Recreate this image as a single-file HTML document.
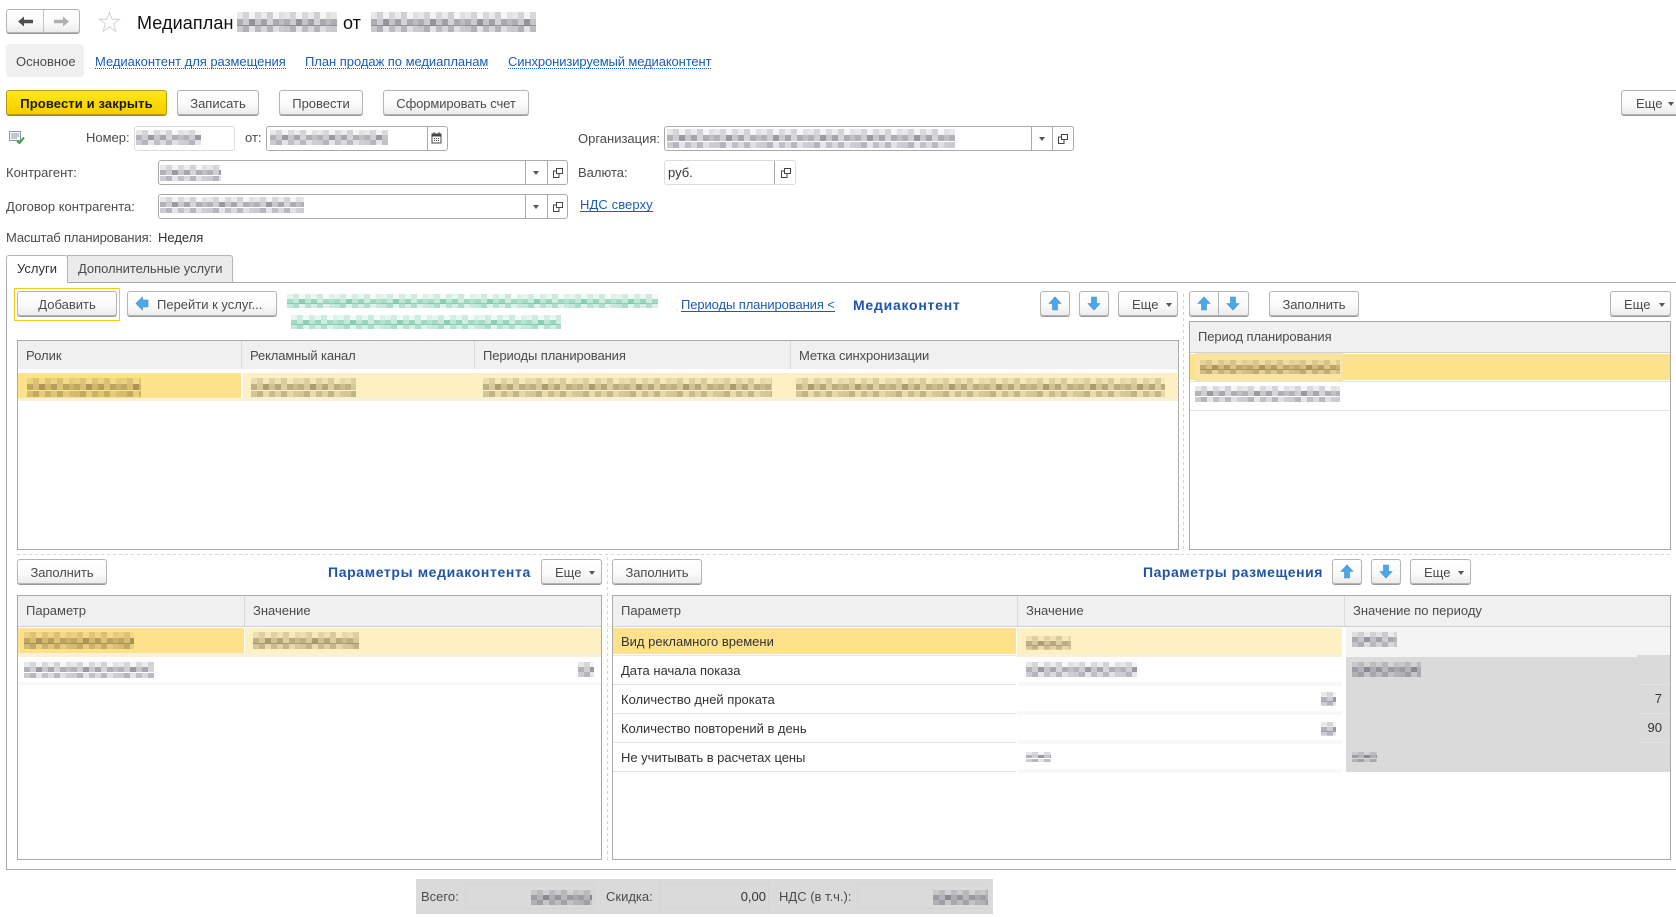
<!DOCTYPE html>
<html lang="ru"><head><meta charset="utf-8"><title>Медиаплан</title>
<style>
html,body{margin:0;padding:0;background:#fff}
#p{position:relative;width:1676px;height:917px;overflow:hidden;background:#fff;font:13px/16px "Liberation Sans",Arial,sans-serif;color:#4b4b4b}
#p div,#p span.a,#p svg{position:absolute;box-sizing:border-box}
.t{position:absolute;white-space:nowrap;height:16px;line-height:16px}
.d{color:#333}
.l{position:absolute;white-space:nowrap;color:#1c5cb8;height:14px;line-height:16px;border-bottom:1px dotted #1c5cb8}
.u{border-bottom:1px solid #1c5cb8}
.h{position:absolute;white-space:nowrap;color:#1f55a8;font-weight:bold;font-size:14px;height:16px;line-height:16px}
.btn{height:25px;border:1px solid #b4b4b4;border-radius:3px;background:linear-gradient(#fff,#fbfbfb 55%,#ececec);box-shadow:0 1px 0 #999;text-align:center;line-height:25px;color:#4b4b4b;white-space:nowrap}
.y{background:linear-gradient(#ffe81c,#fbd800 60%,#f5cd00);border-color:#b59d18;color:#1a1a00;font-weight:bold;box-shadow:0 1px 0 #a08a10;letter-spacing:.12px}
.i{background:#fff;border:1px solid #aaa;border-radius:3px}
.il{border-color:#dcdcdc}
.v{width:1px;background:#aaa}
.tb{border:1px solid #aaa;background:#fff}
.hd{background:#f0f0f0}
.sel{background:#fde28b}
.sl2{background:#fdf1c4}
.halo{background:#f8f0d8}
.ln{height:1px;background:#e4e4e4}
.g{background:#dadada}
.b,.by,.bg{--c:70,70,85;background-repeat:repeat-x;background-size:47px 34%;background-position:0 0,0 50%,0 100%;
background-image:
linear-gradient(90deg,rgba(var(--c),.12) 0 13%,rgba(var(--c),.22) 13% 26%,rgba(var(--c),.06) 26% 38%,rgba(var(--c),.2) 38% 51%,rgba(var(--c),.1) 51% 64%,rgba(var(--c),.24) 64% 77%,rgba(var(--c),.05) 77% 89%,rgba(var(--c),.16) 89% 100%),
linear-gradient(90deg,rgba(var(--c),.42) 0 13%,rgba(var(--c),.26) 13% 26%,rgba(var(--c),.55) 26% 38%,rgba(var(--c),.3) 38% 51%,rgba(var(--c),.48) 51% 64%,rgba(var(--c),.22) 64% 77%,rgba(var(--c),.44) 77% 89%,rgba(var(--c),.34) 89% 100%),
linear-gradient(90deg,rgba(var(--c),.28) 0 13%,rgba(var(--c),.4) 13% 26%,rgba(var(--c),.14) 26% 38%,rgba(var(--c),.34) 38% 51%,rgba(var(--c),.2) 51% 64%,rgba(var(--c),.38) 64% 77%,rgba(var(--c),.16) 77% 89%,rgba(var(--c),.26) 89% 100%)}
.by{--c:105,85,40}
.bg{--c:40,170,120}
.bk{--c:60,60,70}
.dv{background-image:repeating-linear-gradient(0deg,#d4d4d4 0 3px,transparent 3px 6px);width:1px}
.dh{background-image:repeating-linear-gradient(90deg,#d4d4d4 0 3px,transparent 3px 6px);height:1px}
.tri{width:0;height:0;border-left:3px solid transparent;border-right:3px solid transparent;border-top:4px solid #555}
</style></head><body><div id="p">

<!-- nav -->
<div class="btn" style="left:6px;top:9px;width:74px;height:24px"></div>
<div class="v" style="left:43px;top:10px;height:22px;background:#c4c4c4"></div>
<svg style="left:17px;top:15px" width="17" height="13" viewBox="0 0 17 13"><path d="M1 6.5L7 1.5V4.8H16V8.2H7V11.5Z" fill="#4f4f4f"/></svg>
<svg style="left:53px;top:15px" width="17" height="13" viewBox="0 0 17 13"><path d="M16 6.5L10 1.5V4.8H1V8.2H10V11.5Z" fill="#b0b0b0"/></svg>
<svg style="left:98px;top:11px" width="23" height="22" viewBox="0 0 25 24"><path d="M12.5 1.5L15.4 9H23.5L17 13.8L19.4 22L12.5 17.2L5.6 22L8 13.8L1.5 9H9.6Z" fill="#fff" stroke="#cfd0d4" stroke-width="1"/></svg>
<span class="t" style="left:137px;top:13px;font-size:18px;color:#111;height:20px;line-height:20px;letter-spacing:.1px">Медиаплан</span>
<div class="b bk" style="left:237px;top:12px;width:100px;height:20px"></div>
<span class="t" style="left:343px;top:13px;font-size:18px;color:#111;height:20px;line-height:20px">от</span>
<div class="b bk" style="left:371px;top:12px;width:165px;height:20px"></div>

<!-- form tabs -->
<div style="left:6px;top:44px;width:78px;height:33px;background:#f0f0f0;border-radius:4px"></div>
<span class="t" style="left:16px;top:54px">Основное</span>
<span class="l" style="left:95px;top:54px;letter-spacing:-.03px">Медиаконтент для размещения</span>
<span class="l" style="left:305px;top:54px;letter-spacing:-.04px">План продаж по медиапланам</span>
<span class="l" style="left:508px;top:54px;letter-spacing:-.11px">Синхронизируемый медиаконтент</span>

<!-- commands -->
<div class="btn y" style="left:6px;top:90px;width:161px">Провести и закрыть</div>
<div class="btn" style="left:177px;top:90px;width:82px">Записать</div>
<div class="btn" style="left:279px;top:90px;width:84px">Провести</div>
<div class="btn" style="left:383px;top:90px;width:146px;letter-spacing:-.1px">Сформировать счет</div>
<div class="btn" style="left:1621px;top:90px;width:70px;text-align:left;padding-left:14px">Еще</div>
<div class="tri" style="left:1668px;top:102px"></div>

<!-- row 1 -->
<svg style="left:9px;top:131px" width="16" height="13" viewBox="0 0 16 13"><path d="M.5.5H11.5V9.5H.5Z" fill="#f4f8fa" stroke="#8a9aa5"/><path d="M2 3H10M2 5H10M2 7H8" stroke="#8a9aa5"/><path d="M8 10L10.5 12L15 6.5" fill="none" stroke="#3aa13a" stroke-width="2"/></svg>
<span class="t" style="left:86px;top:130px">Номер:</span>
<div class="i il" style="left:134px;top:126px;width:101px;height:25px"></div>
<div class="b" style="left:136px;top:130px;width:65px;height:15px"></div>
<span class="t" style="left:245px;top:130px">от:</span>
<div class="i" style="left:266px;top:126px;width:182px;height:25px"></div>
<div class="v" style="left:427px;top:127px;height:23px"></div>
<div class="b" style="left:270px;top:130px;width:118px;height:15px"></div>
<svg style="left:431px;top:132px" width="11" height="12" viewBox="0 0 11 12"><path d="M1 2H10V11H1Z" fill="#fff" stroke="#444"/><path d="M1 2H10V4.5H1Z" fill="#444"/><path d="M3 0V2M8 0V2" stroke="#444"/><path d="M3 6.5H4M5 6.5H6M7 6.5H8M3 8.5H4M5 8.5H6M7 8.5H8" stroke="#444"/></svg>

<span class="t" style="left:578px;top:131px">Организация:</span>
<div class="i" style="left:664px;top:126px;width:410px;height:25px"></div>
<div class="v" style="left:1031px;top:127px;height:23px"></div>
<div class="v" style="left:1052px;top:127px;height:23px"></div>
<div class="b" style="left:667px;top:129px;width:288px;height:19px"></div>
<div class="tri" style="left:1039px;top:137px"></div>
<svg style="left:1058px;top:134px" width="10" height="10" viewBox="0 0 10 10"><path d="M3.5.5H9.5V5.5H3.5Z M3.5 3H.5V9.5H6V5.5" fill="none" stroke="#444"/></svg>

<!-- row 2 -->
<span class="t" style="left:6px;top:165px">Контрагент:</span>
<div class="i" style="left:158px;top:160px;width:410px;height:25px"></div>
<div class="v" style="left:525px;top:161px;height:23px"></div>
<div class="v" style="left:547px;top:161px;height:23px"></div>
<div class="b" style="left:160px;top:165px;width:61px;height:16px"></div>
<div class="tri" style="left:533px;top:171px"></div>
<svg style="left:553px;top:168px" width="10" height="10" viewBox="0 0 10 10"><path d="M3.5.5H9.5V5.5H3.5Z M3.5 3H.5V9.5H6V5.5" fill="none" stroke="#444"/></svg>
<span class="t" style="left:578px;top:165px">Валюта:</span>
<div class="i il" style="left:664px;top:160px;width:132px;height:25px"></div>
<div class="v" style="left:774px;top:161px;height:23px"></div>
<span class="t d" style="left:668px;top:165px">руб.</span>
<svg style="left:781px;top:168px" width="10" height="10" viewBox="0 0 10 10"><path d="M3.5.5H9.5V5.5H3.5Z M3.5 3H.5V9.5H6V5.5" fill="none" stroke="#444"/></svg>

<!-- row 3 -->
<span class="t" style="left:6px;top:199px">Договор контрагента:</span>
<div class="i" style="left:158px;top:194px;width:410px;height:25px"></div>
<div class="v" style="left:525px;top:195px;height:23px"></div>
<div class="v" style="left:547px;top:195px;height:23px"></div>
<div class="b" style="left:160px;top:197px;width:144px;height:16px"></div>
<div class="tri" style="left:533px;top:205px"></div>
<svg style="left:553px;top:202px" width="10" height="10" viewBox="0 0 10 10"><path d="M3.5.5H9.5V5.5H3.5Z M3.5 3H.5V9.5H6V5.5" fill="none" stroke="#444"/></svg>
<span class="l u" style="left:580px;top:197px;letter-spacing:.1px">НДС сверху</span>

<span class="t" style="left:6px;top:230px;letter-spacing:-.15px">Масштаб планирования:</span>
<span class="t d" style="left:158px;top:230px">Неделя</span>

<!-- tabs -->
<div style="left:6px;top:282px;width:1670px;height:588px;border-top:1px solid #aaa;border-left:1px solid #aaa;border-bottom:1px solid #aaa"></div>
<div style="left:67px;top:255px;width:166px;height:28px;background:#ebebeb;border:1px solid #b4b4b4;border-bottom:1px solid #aaa;border-radius:0 3px 0 0"></div>
<div style="left:6px;top:255px;width:62px;height:28px;background:#fff;border:1px solid #b4b4b4;border-bottom:0;border-radius:3px 3px 0 0"></div>
<span class="t d" style="left:17px;top:261px">Услуги</span>
<span class="t" style="left:78px;top:261px;letter-spacing:-.05px">Дополнительные услуги</span>

<!-- toolbar -->
<div style="left:14px;top:288px;width:106px;height:33px;border:1px solid #f8c913;border-radius:1px"></div>
<div class="btn" style="left:17px;top:291px;width:100px">Добавить</div>
<div class="btn" style="left:127px;top:291px;width:150px;text-align:left;padding-left:29px">Перейти к услуг...</div>
<svg style="left:135px;top:296px" width="14" height="15" viewBox="0 0 14 15"><path d="M1 7.5L7.5 1V4H13V11H7.5V14Z" fill="#4aa8e8" stroke="#3a8fd0" stroke-width=".6"/></svg>
<div class="bg" style="left:287px;top:294px;width:371px;height:14px"></div>
<div class="bg" style="left:291px;top:315px;width:270px;height:14px"></div>
<span class="l u" style="left:681px;top:297px;letter-spacing:-.1px">Периоды планирования &lt;</span>
<span class="h" style="left:853px;top:297px;letter-spacing:.75px">Медиаконтент</span>
<div class="btn" style="left:1040px;top:291px;width:30px"></div>
<svg style="left:1047px;top:296px" width="16" height="15" viewBox="0 0 16 15"><path d="M8 1L14 7.5H10.5V14H5.5V7.5H2Z" fill="#4aa8e8" stroke="#3a8fd0" stroke-width=".6"/></svg>
<div class="btn" style="left:1079px;top:291px;width:30px"></div>
<svg style="left:1086px;top:296px" width="16" height="15" viewBox="0 0 16 15"><path d="M8 14L14 7.5H10.5V1H5.5V7.5H2Z" fill="#4aa8e8" stroke="#3a8fd0" stroke-width=".6"/></svg>
<div class="btn" style="left:1118px;top:291px;width:60px;text-align:left;padding-left:13px">Еще</div>
<div class="tri" style="left:1166px;top:303px"></div>

<div class="dv" style="left:1183px;top:291px;height:258px"></div>
<div class="btn" style="left:1189px;top:291px;width:60px"></div>
<div class="v" style="left:1218px;top:292px;height:23px;background:#b4b4b4"></div>
<svg style="left:1196px;top:296px" width="16" height="15" viewBox="0 0 16 15"><path d="M8 1L14 7.5H10.5V14H5.5V7.5H2Z" fill="#4aa8e8" stroke="#3a8fd0" stroke-width=".6"/></svg>
<svg style="left:1225px;top:296px" width="16" height="15" viewBox="0 0 16 15"><path d="M8 14L14 7.5H10.5V1H5.5V7.5H2Z" fill="#4aa8e8" stroke="#3a8fd0" stroke-width=".6"/></svg>
<div class="btn" style="left:1269px;top:291px;width:90px;letter-spacing:-.1px">Заполнить</div>
<div class="btn" style="left:1610px;top:291px;width:61px;text-align:left;padding-left:13px">Еще</div>
<div class="tri" style="left:1659px;top:303px"></div>

<!-- table 1 -->
<div class="tb" style="left:17px;top:340px;width:1162px;height:210px"></div>
<div class="hd" style="left:18px;top:341px;width:1160px;height:28px"></div>
<div style="left:241px;top:341px;width:1px;height:28px;background:#d8d8d8"></div>
<div style="left:474px;top:341px;width:1px;height:28px;background:#d8d8d8"></div>
<div style="left:790px;top:341px;width:1px;height:28px;background:#d8d8d8"></div>
<span class="t" style="left:26px;top:348px">Ролик</span>
<span class="t" style="left:250px;top:348px;letter-spacing:-.13px">Рекламный канал</span>
<span class="t" style="left:483px;top:348px;letter-spacing:-.1px">Периоды планирования</span>
<span class="t" style="left:799px;top:348px;letter-spacing:-.1px">Метка синхронизации</span>
<div class="halo" style="left:18px;top:398px;width:1160px;height:3px"></div>
<div class="sel" style="left:18px;top:373px;width:223px;height:25px"></div>
<div class="sl2" style="left:243px;top:373px;width:935px;height:25px"></div>
<div class="by" style="left:27px;top:378px;width:114px;height:19px"></div>
<div class="by" style="left:251px;top:378px;width:105px;height:19px"></div>
<div class="by" style="left:483px;top:378px;width:289px;height:19px"></div>
<div class="by" style="left:796px;top:378px;width:369px;height:19px"></div>

<!-- table 2 -->
<div class="tb" style="left:1189px;top:321px;width:482px;height:229px"></div>
<div class="hd" style="left:1190px;top:322px;width:480px;height:30px"></div>
<div style="left:1190px;top:352px;width:480px;height:1px;background:#d0d0d0"></div>
<span class="t" style="left:1198px;top:329px;letter-spacing:-.1px">Период планирования</span>
<div class="sel" style="left:1190px;top:354px;width:480px;height:26px"></div>
<div class="ln" style="left:1190px;top:381px;width:480px"></div>
<div class="ln" style="left:1190px;top:410px;width:480px"></div>
<div style="left:1195px;top:353px;width:148px;height:28px;background:#f8e5a4"></div>
<div class="by" style="left:1200px;top:360px;width:140px;height:14px"></div>
<div class="b" style="left:1195px;top:386px;width:145px;height:16px"></div>

<!-- splitter -->
<div class="dh" style="left:17px;top:554px;width:1654px"></div>
<div class="dv" style="left:607px;top:554px;height:306px"></div>

<!-- left bottom -->
<div class="btn" style="left:17px;top:559px;width:90px;letter-spacing:-.1px">Заполнить</div>
<span class="h" style="left:328px;top:564px;letter-spacing:.63px">Параметры медиаконтента</span>
<div class="btn" style="left:541px;top:559px;width:61px;text-align:left;padding-left:13px">Еще</div>
<div class="tri" style="left:589px;top:571px"></div>

<div class="tb" style="left:17px;top:595px;width:585px;height:265px"></div>
<div class="hd" style="left:18px;top:596px;width:583px;height:30px"></div>
<div style="left:18px;top:626px;width:583px;height:1px;background:#d0d0d0"></div>
<div style="left:244px;top:596px;width:1px;height:30px;background:#d8d8d8"></div>
<span class="t" style="left:26px;top:603px">Параметр</span>
<span class="t" style="left:253px;top:603px">Значение</span>
<div class="halo" style="left:18px;top:653px;width:583px;height:4px"></div>
<div class="sel" style="left:18px;top:628px;width:226px;height:25px"></div>
<div class="sl2" style="left:245px;top:628px;width:356px;height:25px"></div>
<div class="by" style="left:24px;top:632px;width:110px;height:17px"></div>
<div class="by" style="left:253px;top:632px;width:106px;height:17px"></div>
<div class="b" style="left:24px;top:662px;width:130px;height:16px"></div>
<div class="b" style="left:578px;top:662px;width:16px;height:15px"></div>
<div style="left:18px;top:682px;width:583px;height:3px;background:#f8f8f8"></div>

<!-- right bottom -->
<div class="btn" style="left:612px;top:559px;width:90px;letter-spacing:-.1px">Заполнить</div>
<span class="h" style="left:1143px;top:564px;letter-spacing:.52px">Параметры размещения</span>
<div class="btn" style="left:1332px;top:559px;width:30px"></div>
<svg style="left:1339px;top:564px" width="16" height="15" viewBox="0 0 16 15"><path d="M8 1L14 7.5H10.5V14H5.5V7.5H2Z" fill="#4aa8e8" stroke="#3a8fd0" stroke-width=".6"/></svg>
<div class="btn" style="left:1371px;top:559px;width:30px"></div>
<svg style="left:1378px;top:564px" width="16" height="15" viewBox="0 0 16 15"><path d="M8 14L14 7.5H10.5V1H5.5V7.5H2Z" fill="#4aa8e8" stroke="#3a8fd0" stroke-width=".6"/></svg>
<div class="btn" style="left:1410px;top:559px;width:61px;text-align:left;padding-left:13px">Еще</div>
<div class="tri" style="left:1458px;top:571px"></div>

<div class="tb" style="left:612px;top:595px;width:1059px;height:265px"></div>
<div class="hd" style="left:613px;top:596px;width:1057px;height:30px"></div>
<div style="left:613px;top:626px;width:1057px;height:1px;background:#d0d0d0"></div>
<div style="left:1017px;top:596px;width:1px;height:30px;background:#d8d8d8"></div>
<div style="left:1344px;top:596px;width:1px;height:30px;background:#d8d8d8"></div>
<span class="t" style="left:621px;top:603px">Параметр</span>
<span class="t" style="left:1026px;top:603px">Значение</span>
<span class="t" style="left:1353px;top:603px">Значение по периоду</span>

<div class="sel" style="left:613px;top:628px;width:403px;height:26px"></div>
<div class="halo" style="left:1017px;top:654px;width:325px;height:3px"></div>
<div class="sl2" style="left:1017px;top:628px;width:325px;height:26px"></div>
<div style="left:1346px;top:627px;width:324px;height:30px;background:#f4f4f4"></div>
<div class="g" style="left:1346px;top:657px;width:324px;height:115px"></div>
<div class="g" style="left:1637px;top:655px;width:33px;height:2px"></div>
<div class="ln" style="left:613px;top:655px;width:403px"></div>
<div class="ln" style="left:613px;top:684px;width:403px"></div>
<div class="ln" style="left:613px;top:713px;width:403px"></div>
<div class="ln" style="left:613px;top:742px;width:403px"></div>
<div class="ln" style="left:613px;top:771px;width:403px"></div>
<div style="left:1017px;top:682px;width:325px;height:4px;background:#f8f8f8"></div>
<div style="left:1017px;top:711px;width:325px;height:4px;background:#f8f8f8"></div>
<div style="left:1017px;top:740px;width:325px;height:4px;background:#f8f8f8"></div>
<div style="left:1017px;top:769px;width:325px;height:4px;background:#f8f8f8"></div>
<div style="left:1637px;top:684px;width:33px;height:1px;background:#e2e2e2"></div>
<div style="left:1637px;top:713px;width:33px;height:1px;background:#e2e2e2"></div>
<div style="left:1637px;top:742px;width:33px;height:1px;background:#e2e2e2"></div>

<span class="t d" style="left:621px;top:634px">Вид рекламного времени</span>
<span class="t d" style="left:621px;top:663px">Дата начала показа</span>
<span class="t d" style="left:621px;top:692px">Количество дней проката</span>
<span class="t d" style="left:621px;top:721px;letter-spacing:-.03px">Количество повторений в день</span>
<span class="t d" style="left:621px;top:750px;letter-spacing:-.03px">Не учитывать в расчетах цены</span>

<div class="by" style="left:1026px;top:636px;width:45px;height:14px"></div>
<div class="b" style="left:1026px;top:662px;width:111px;height:15px"></div>
<div class="b" style="left:1321px;top:692px;width:15px;height:14px"></div>
<div class="b" style="left:1321px;top:722px;width:15px;height:14px"></div>
<div class="b" style="left:1026px;top:752px;width:25px;height:10px"></div>
<div class="b" style="left:1352px;top:632px;width:45px;height:15px"></div>
<div class="b" style="left:1352px;top:662px;width:69px;height:15px"></div>
<div class="b" style="left:1352px;top:752px;width:25px;height:10px"></div>
<span class="t d" style="left:1640px;top:691px;width:22px;text-align:right">7</span>
<span class="t d" style="left:1640px;top:720px;width:22px;text-align:right">90</span>

<!-- footer -->
<div class="g" style="left:416px;top:879px;width:577px;height:35px"></div>
<div style="left:465px;top:884px;width:130px;height:25px;border:1px solid #d4d4d4"></div>
<div style="left:659px;top:884px;width:110px;height:25px;border:1px solid #d4d4d4"></div>
<div style="left:857px;top:884px;width:131px;height:25px;border:1px solid #d4d4d4"></div>
<span class="t" style="left:421px;top:889px">Всего:</span>
<span class="t" style="left:606px;top:889px">Скидка:</span>
<span class="t d" style="left:700px;top:889px;width:66px;text-align:right">0,00</span>
<span class="t" style="left:779px;top:889px">НДС (в т.ч.):</span>
<div class="b" style="left:531px;top:890px;width:61px;height:15px"></div>
<div class="b" style="left:933px;top:890px;width:55px;height:15px"></div>

</div></body></html>
